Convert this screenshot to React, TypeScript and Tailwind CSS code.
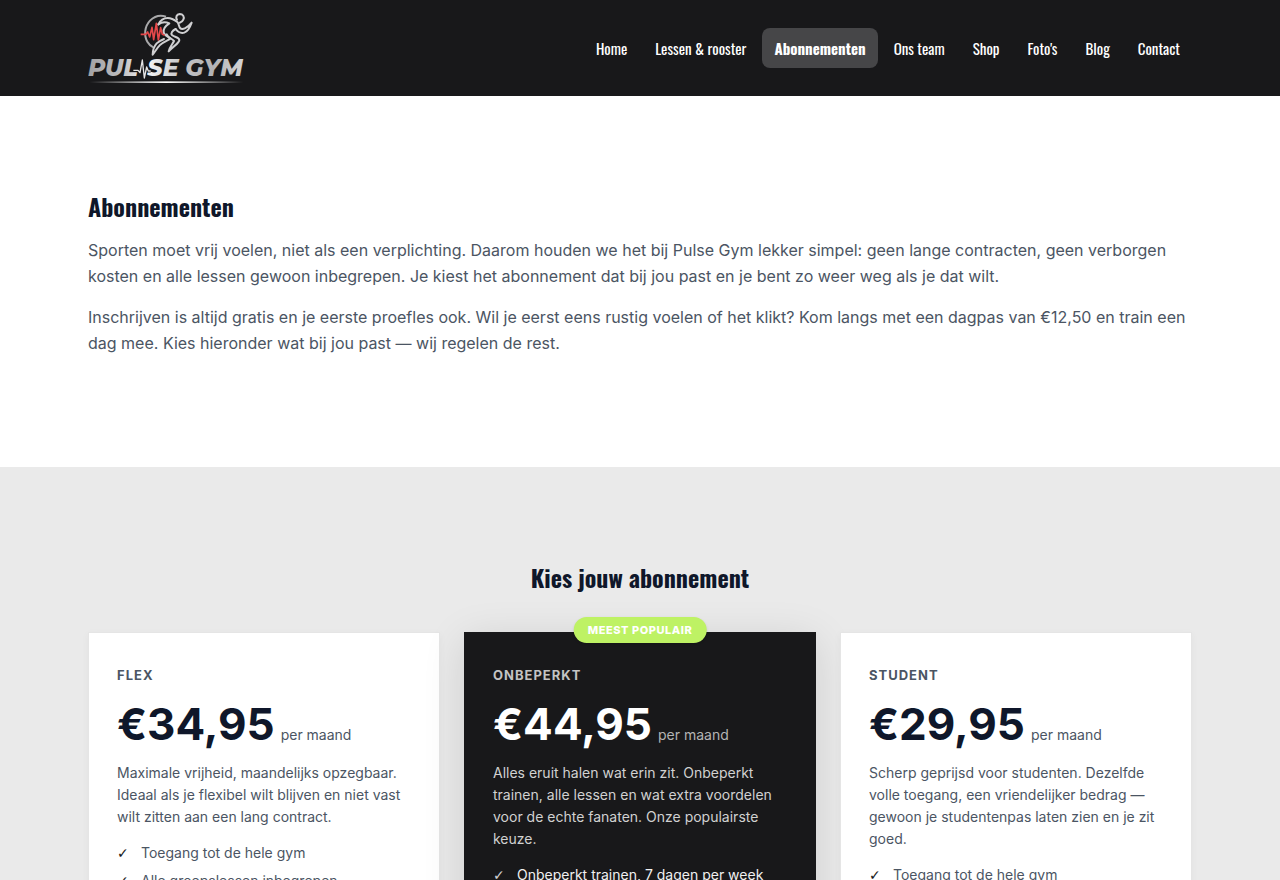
import { useState } from 'react';

interface Plan {
  id: number;
  name: string;
  price: string;
  description: string;
  features: string[];
  popular?: boolean;
}

const navItems = ['Home', 'Lessen & rooster', 'Abonnementen', 'Ons team', 'Shop', "Foto's", 'Blog', 'Contact'];

const plans: Plan[] = [
  {
    id: 1,
    name: 'Flex',
    price: '€34,95',
    description:
      'Maximale vrijheid, maandelijks opzegbaar. Ideaal als je flexibel wilt blijven en niet vast wilt zitten aan een lang contract.',
    features: ['Toegang tot de hele gym', 'Alle groepslessen inbegrepen'],
  },
  {
    id: 2,
    name: 'Onbeperkt',
    price: '€44,95',
    description:
      'Alles eruit halen wat erin zit. Onbeperkt trainen, alle lessen en wat extra voordelen voor de echte fanaten. Onze populairste keuze.',
    features: ['Onbeperkt trainen, 7 dagen per week'],
    popular: true,
  },
  {
    id: 3,
    name: 'Student',
    price: '€29,95',
    description:
      'Scherp geprijsd voor studenten. Dezelfde volle toegang, een vriendelijker bedrag — gewoon je studentenpas laten zien en je zit goed.',
    features: ['Toegang tot de hele gym'],
  },
];

function Logo() {
  return (
    <svg viewBox="24 33 474 222" className="h-[74px] w-[158px]" fill="none" role="img" aria-label="Pulse Gym">
      <defs>
        <linearGradient id="silver" gradientUnits="userSpaceOnUse" x1="28" y1="0" x2="494" y2="0">
          <stop offset="0" stopColor="#a3a3a5" />
          <stop offset="0.2" stopColor="#bdbdbf" />
          <stop offset="0.38" stopColor="#f4f4f5" />
          <stop offset="0.6" stopColor="#c4c4c6" />
          <stop offset="0.8" stopColor="#b2b2b4" />
          <stop offset="1" stopColor="#d6d6d8" />
        </linearGradient>
        <linearGradient id="underline" gradientUnits="userSpaceOnUse" x1="28" y1="0" x2="490" y2="0">
          <stop offset="0" stopColor="#fff" stopOpacity="0" />
          <stop offset="0.5" stopColor="#fff" />
          <stop offset="1" stopColor="#fff" stopOpacity="0" />
        </linearGradient>
      </defs>

      {/* Ring */}
      <path d="M258 50C240 44 222 50 210 62C194 79 191 106 202 125C206 132 212 138 220 142" stroke="#a9a9ab" strokeWidth="6" />

      {/* Runner */}
      <g stroke="#cfcfd1" strokeWidth="6" strokeLinecap="round" strokeLinejoin="round">
        <path d="M291 59C286 51 290 43 299 42C309 42 314 51 310 59C308 64 303 67 299 68" />
        <path d="M235 73C241 61 251 54 263 54C274 54 284 60 292 66C297 71 296 78 300 84C306 90 321 86 335 68C330 82 323 95 313 98C303 101 293 95 287 87" />
        <path d="M235 73C245 66 257 65 268 70C257 77 249 87 251 97C253 106 264 110 271 116C262 122 250 126 241 134C232 143 226 154 218 164C218 151 222 139 230 130C236 124 245 120 252 117" />
        <path d="M287 87C277 92 271 100 276 105C284 112 297 112 298 120C299 129 280 138 266 154C268 142 278 132 282 123C276 116 263 112 260 103" />
      </g>

      {/* Heartbeat */}
      <path
        d="M182 103H197L203 96L209 111L216 82L221 119L229 70L235 120L242 83L247 103L254 106"
        stroke="#e5484a"
        strokeWidth="5"
        strokeLinejoin="round"
      />

      <g
        fill="url(#silver)"
        fontFamily="Montserrat, 'DejaVu Sans', 'Liberation Sans', sans-serif"
        fontSize="71"
        fontWeight="800"
        fontStyle="italic"
      >
        <text x="24" y="228">PUL</text>
        <text x="202" y="228">SE</text>
        <text x="316" y="228">GYM</text>
      </g>
      <path
        d="M162 211H174L180 218L187 180L193 234L200 201L205 213H212"
        stroke="#18181a"
        strokeWidth="9"
        strokeLinejoin="round"
      />
      <path
        d="M160 211H174L180 218L187 180L193 234L200 201L205 213H212"
        stroke="#e4e4e5"
        strokeWidth="4"
        strokeLinejoin="round"
      />
      <rect x="28" y="244" width="462" height="5" fill="url(#underline)" />
    </svg>
  );
}

function PlanCard({ plan }: { plan: Plan }) {
  const dark = plan.popular;

  return (
    <article
      className={`relative border px-7 pt-8 pb-7 ${
        dark
          ? 'bg-[#18181a] border-[#18181a] text-white shadow-[0_8px_40px_rgba(0,0,0,0.12)]'
          : 'bg-white border-[#e5e5e5] text-[#0f172a] shadow-[0_2px_8px_rgba(0,0,0,0.04)]'
      }`}
    >
      {dark && (
        <span className="absolute -top-4 left-1/2 -translate-x-1/2 whitespace-nowrap rounded-full bg-[#bef264] px-[14px] py-1 text-[11px] leading-[18px] font-extrabold uppercase tracking-wider text-white shadow-sm">
          Meest populair
        </span>
      )}
      <h3
        className={`text-[13px] leading-5 font-bold uppercase tracking-[1px] ${
          dark ? 'text-[#c4c4c4]' : 'text-[#4b5563]'
        }`}
      >
        {plan.name}
      </h3>
      <p className="mt-[11px] flex items-baseline gap-[6px]">
        <span className="text-[44px] leading-[56px] font-bold">{plan.price}</span>
        <span className={`text-[14px] ${dark ? 'text-[#b4b4b4]' : 'text-[#4b5563]'}`}>per maand</span>
      </p>
      <p className={`mt-[10px] text-[14px] leading-[22px] ${dark ? 'text-[#d1d1d1]' : 'text-[#4b5563]'}`}>
        {plan.description}
      </p>
      <ul className={`mt-[14px] space-y-[6px] text-[14px] leading-[22px] ${dark ? 'text-[#f0f0f0]' : 'text-[#4b5563]'}`}>
        {plan.features.map((feature) => (
          <li key={feature} className="flex">
            <span
              className={`w-6 shrink-0 font-['DejaVu_Sans',sans-serif] ${dark ? 'text-[#d1d1d1]' : 'text-[#18181a]'}`}
            >
              ✓
            </span>
            {feature}
          </li>
        ))}
      </ul>
    </article>
  );
}

export default function App() {
  const [active, setActive] = useState('Abonnementen');

  return (
    <div className="min-h-screen bg-white font-['Inter','Liberation_Sans',sans-serif]">
      {/* Header */}
      <header className="bg-[#18181a]">
        <div className="mx-auto flex h-24 max-w-[1200px] items-center justify-between px-12">
          <a href="#home">
            <Logo />
          </a>
          <nav className="flex gap-1 font-['Oswald','Liberation_Sans_Narrow','Liberation_Sans',sans-serif]">
            {navItems.map((item) => (
              <a
                key={item}
                href="#"
                onClick={() => setActive(item)}
                className={`whitespace-nowrap rounded-lg px-3 py-2 text-[15px] leading-6 text-white ${
                  active === item ? 'bg-[#464648] font-bold' : 'font-normal hover:bg-white/10'
                }`}
              >
                {item}
              </a>
            ))}
          </nav>
        </div>
      </header>

      {/* Intro */}
      <section className="mx-auto max-w-[1200px] px-12 py-24 text-base leading-[26px] text-[#4b5563]">
        <h1 className="mb-[17px] font-['Oswald','Liberation_Sans_Narrow','Liberation_Sans',sans-serif] text-2xl leading-7 font-bold text-[#0f172a]">
          Abonnementen
        </h1>
        <p className="mb-[15px]">
          Sporten moet vrij voelen, niet als een verplichting. Daarom houden we het bij Pulse Gym lekker simpel: geen
          lange contracten, geen verborgen kosten en alle lessen gewoon inbegrepen. Je kiest het abonnement dat bij jou
          past en je bent zo weer weg als je dat wilt.
        </p>
        <p className="mb-[15px]">
          Inschrijven is altijd gratis en je eerste proefles ook. Wil je eerst eens rustig voelen of het klikt? Kom
          langs met een dagpas van €12,50 en train een dag mee. Kies hieronder wat bij jou past — wij regelen de rest.
        </p>
      </section>

      {/* Plans */}
      <section className="bg-[#eaeaea] py-24">
        <div className="mx-auto max-w-[1200px] px-12">
          <h2 className="mb-[41px] text-center font-['Oswald','Liberation_Sans_Narrow','Liberation_Sans',sans-serif] text-2xl leading-7 font-bold text-[#0f172a]">
            Kies jouw abonnement
          </h2>
          <div className="grid grid-cols-3 gap-6">
            {plans.map((plan) => (
              <PlanCard key={plan.id} plan={plan} />
            ))}
          </div>
        </div>
      </section>
    </div>
  );
}
